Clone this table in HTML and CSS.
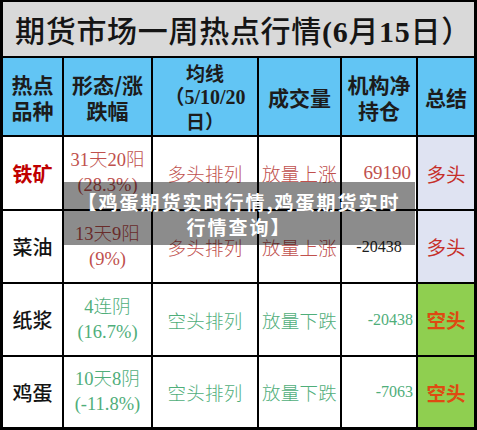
FILE: index.html
```html
<!DOCTYPE html>
<html lang="zh-CN">
<head>
<meta charset="utf-8">
<title>期货市场一周热点行情</title>
<link rel="stylesheet" href="styles.css">
</head>
<body>
<div class="sheet">
  <div class="title"><span>期货市场一周热点行情<span class="num">(6</span>月<span class="num">15</span>日）</span></div>

  <div class="cell head">热点品种</div>
  <div class="cell head">形态/涨跌幅</div>
  <div class="cell head avg"><div>均线<br><span class="num">（5/10/20</span><br>日）</div></div>
  <div class="cell head">成交量</div>
  <div class="cell head">机构净持仓</div>
  <div class="cell head">总结</div>

  <div class="cell name up-name">铁矿</div>
  <div class="cell shape up"><div>31天20阳</div><div>(28.3%)</div></div>
  <div class="cell trend up">多头排列</div>
  <div class="cell trend up">放量上涨</div>
  <div class="cell pos up big">69190</div>
  <div class="cell sum long">多头</div>

  <div class="cell name">菜油</div>
  <div class="cell shape up"><div>13天9阳</div><div>(9%)</div></div>
  <div class="cell trend up">多头排列</div>
  <div class="cell trend up">放量上涨</div>
  <div class="cell pos mid">-20438</div>
  <div class="cell sum long">多头</div>

  <div class="cell name">纸浆</div>
  <div class="cell shape down"><div>4连阴</div><div>(16.7%)</div></div>
  <div class="cell trend down">空头排列</div>
  <div class="cell trend down">放量下跌</div>
  <div class="cell pos down">-20438</div>
  <div class="cell sum short">空头</div>

  <div class="cell name">鸡蛋</div>
  <div class="cell shape down"><div>10天8阴</div><div>(-11.8%)</div></div>
  <div class="cell trend down">空头排列</div>
  <div class="cell trend down">放量下跌</div>
  <div class="cell pos down">-7063</div>
  <div class="cell sum short">空头</div>

  <div class="banner"><div>【鸡蛋期货实时行情,鸡蛋期货实时<br>行情查询】</div></div>
</div>
</body>
</html>
```
FILE: styles.css
```css
html, body {
  margin: 0;
  padding: 0;
  background: #ffffff;
}

body {
  font-family: "Noto Sans CJK SC", "Noto Sans", sans-serif;
}

.sheet {
  position: relative;
  box-sizing: border-box;
  width: 477px;
  height: 430px;
  display: grid;
  grid-template-columns: 59px 87px 104px 81px 74px 56px;
  grid-template-rows: 54px 77px 72px 71px 71px 70px;
  gap: 2px;
  padding: 2px 3px 3px 3px;
  background: #000000;
}

.title {
  grid-column: 1 / -1;
  background: #d9d9d9;
  display: flex;
  align-items: center;
  padding-left: 12px;
  font-family: "Noto Sans CJK SC", sans-serif;
  font-size: 30px;
  font-weight: 500;
  letter-spacing: 0.7px;
  color: #151515;
  white-space: nowrap;
}

.title .num {
  font-family: "Liberation Serif", serif;
  font-weight: 700;
}

.cell {
  background: #ffffff;
  display: flex;
  flex-direction: column;
  align-items: center;
  justify-content: center;
  text-align: center;
  overflow: hidden;
}

.head {
  background: #62c5f4;
  color: #1c1c1c;
  font-size: 21px;
  font-weight: 700;
  line-height: 26px;
  padding: 0 1px;
}

.head.avg {
  font-size: 19px;
  line-height: 23px;
  white-space: nowrap;
}

.head .num {
  font-family: "Liberation Serif", "Noto Sans CJK SC", serif;
  font-size: 20px;
}

.name {
  font-size: 20px;
  font-weight: 500;
  color: #141414;
}

.name.up-name {
  color: #c00000;
  font-weight: 700;
}

.shape {
  font-family: "Liberation Serif", "Noto Sans CJK SC", serif;
  font-size: 18.5px;
  line-height: 25px;
  font-weight: 300;
}

.trend {
  font-size: 18.5px;
  font-weight: 300;
  letter-spacing: 0.3px;
}

.up {
  color: #c0504d;
}

.down {
  color: #4fae7a;
}

.pos {
  font-family: "Liberation Serif", serif;
  align-items: flex-end;
  padding-right: 3px;
  font-size: 16px;
}

.pos.big {
  font-size: 19px;
  padding-right: 5px;
}

.pos.mid {
  align-items: center;
  padding-right: 0;
  color: #1e1e1e;
}

.sum {
  font-size: 19.5px;
}

.sum.long {
  background: #dfe3f2;
  color: #c62f2a;
  font-weight: 400;
}

.sum.short {
  background: #8fcf50;
  color: #de4a12;
  font-weight: 700;
}

.banner {
  position: absolute;
  left: 63px;
  top: 182px;
  width: 352px;
  height: 63px;
  box-sizing: border-box;
  display: flex;
  align-items: center;
  justify-content: center;
  text-align: center;
  background: rgba(0, 0, 0, 0.45);
  color: #ffffff;
  font-family: "Noto Sans CJK SC", sans-serif;
  font-size: 19px;
  font-weight: 700;
  letter-spacing: 2px;
  line-height: 25px;
  white-space: nowrap;
}
```
